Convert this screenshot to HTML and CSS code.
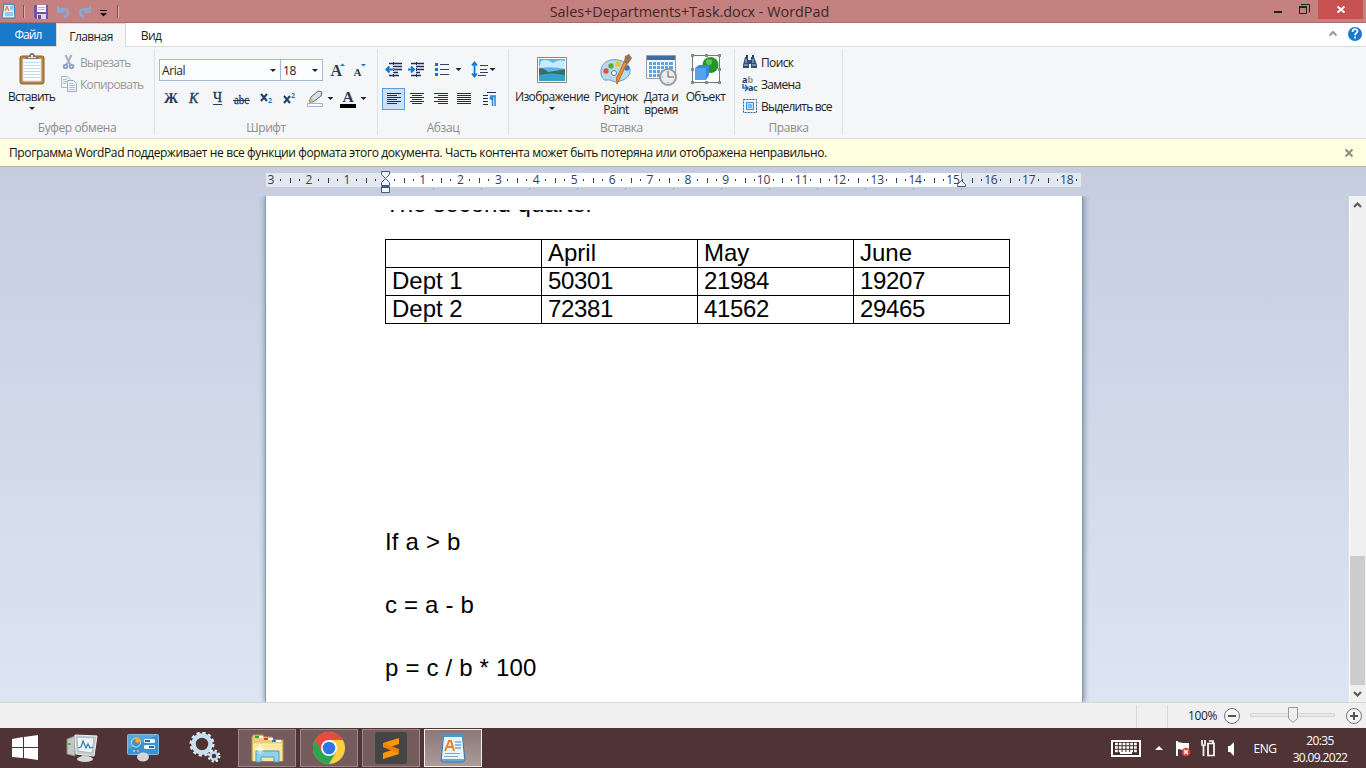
FILE: index.html
```html
<!DOCTYPE html>
<html lang="ru">
<head>
<meta charset="utf-8">
<title>Sales+Departments+Task.docx - WordPad</title>
<link rel="stylesheet" href="styles.css">
</head>
<body>
<div class="window">
  <header class="titlebar">
    <svg class="quick" width="125" height="22" viewBox="0 0 125 22">
      <path d="M4 4h10l1 14H2z" fill="#d8efff" stroke="#337daf"/><path d="M3 3h11v2H3z" fill="#4b9bc5"/><path d="M5 11l2-5 2 5M6 9h2" stroke="#f17a16" fill="none"/><path d="M10 7h3M10 9h3M5 13h8M5 15h8" stroke="#609bc6"/>
      <path d="M23.500 5v13M117.500 5v13" stroke="#7e5053"/><path d="M24.500 6v12M118.500 6v12" stroke="#ddb0b0"/>
      <path d="M34 5h14v14H36l-2-2z" fill="#7651aa"/><path d="M37 5h9v7h-9z" fill="#faf9ff"/><path d="M38 7.500h7M38 9.500h7" stroke="#b8b2ce"/><path d="M37 14h9v5h-9z" fill="#ddd6ed"/><path d="M38 15h3v4h-3z" fill="#6a4b95"/>
      <path d="M60 9.500h4c5 0 5 5 0 8" fill="none" stroke="#91a5c8" stroke-width="3"/><path d="M57 5v8h8z" fill="#91a5c8"/>
      <path d="M88 9.500h-4c-5 0-5 5 0 8" fill="none" stroke="#91a5c8" stroke-width="3"/><path d="M91 5v8h-8z" fill="#91a5c8"/>
      <path d="M100 10.500h7" stroke="#111"/><path d="M100 13h7l-3.500 3.500z" fill="#111"/>
    </svg>
    <h1 class="title">Sales+Departments+Task.docx - WordPad</h1>
    <svg class="winctl" width="92" height="22" viewBox="0 0 92 22"><path d="M0 11h8v2H0z" fill="#222"/><path d="M25.500 6.500h7v7h-7zM27 4.500h8.500v8" fill="none" stroke="#222"/><path d="M25 6h8v2h-8z" fill="#222"/><path d="M44 0h45v19H44z" fill="#c75050"/><path d="M63.500 6.500l7 6M70.500 6.500l-7 6" stroke="#fff" stroke-width="2"/></svg>
  </header>
  <nav class="tabs">
    <span class="tab file">Файл</span><span class="tab active">Главная</span><span class="tab view">Вид</span>
    <svg class="help" width="40" height="23" viewBox="0 0 40 23"><path d="M3.500 12.500l3.500-3.500 3.500 3.500" fill="none" stroke="#999" stroke-width="2"/><circle cx="29" cy="11" r="7" fill="#1979ca"/><path d="M26.500 9c0-4 5-3.500 5-.8 0 1.800-2.500 1.900-2.500 4M29 13.500v2" fill="none" stroke="#fff" stroke-width="1.800"/></svg>
  </nav>
  <section class="ribbon">
    <div class="group clipboard">
      <div class="tools">
        <div class="paste">
          <svg width="26" height="32" viewBox="0 0 26 32"><rect x="1" y="3" width="24" height="28" rx="2" fill="#b98343" stroke="#91602b"/><path d="M4 6h18v22H4z" fill="#fbfdff" stroke="#ddd"/><path d="M5 9.500h16M5 12.500h16M5 15.500h16M5 18.500h16M5 21.500h16M5 24.500h16" stroke="#c3dbee"/><path d="M6 6V4h4q0-4 3-4t3 4h4v2z" fill="#797c80"/><path d="M9 4.500h8" stroke="#ddd"/><circle cx="13" cy="3" r="1" fill="#fff"/></svg>
          <span>Вставить</span><i class="arrow"></i>
        </div>
        <div class="clips">
          <div class="clip"><svg width="16" height="16" viewBox="0 0 16 16"><path d="M4.500 1l5 10M10.500 1l-5 10" stroke="#a6b1c7" stroke-width="2"/><circle cx="4.500" cy="12.500" r="1.800" fill="none" stroke="#91a4c4" stroke-width="2"/><circle cx="10.500" cy="12.500" r="1.800" fill="none" stroke="#91a4c4" stroke-width="2"/></svg><span>Вырезать</span></div>
          <div class="clip"><svg width="16" height="17" viewBox="0 0 16 17"><path d="M.5.5h6l3 3v8h-9z" fill="#f2f6fc" stroke="#a7b6ce"/><path d="M6.500 4.500h6l3 3v8h-9z" fill="#f5f9ff" stroke="#96a9c6"/><path d="M2 3.500h4M2 5.500h4M2 7.500h3M8 7.500h4M8 9.500h6M8 11.500h6M8 13.500h6" stroke="#a9bedc"/></svg><span>Копировать</span></div>
        </div>
      </div>
      <div class="caption">Буфер обмена</div>
    </div>
    <div class="group font-group">
      <div class="tools font-tools">
        <div class="font-row">
          <div class="combo family"><span>Arial</span><i class="arrow"></i></div><div class="combo size"><span>18</span><i class="arrow"></i></div>
          <svg width="44" height="22" viewBox="0 0 44 22"><text x="7.500" y="17" class="serif" font-size="16">A</text><path d="M17 7h5l-2.500-2.500zM38 5h5l-2.500 2.500z" fill="#1979ca"/><text x="30.500" y="17" class="serif" font-size="11">A</text></svg>
        </div>
        <svg width="214" height="24" viewBox="0 0 214 24">
          <text class="serif" x="5" y="17" font-size="14" textLength="14" lengthAdjust="spacingAndGlyphs">Ж</text><text class="serif light" x="30" y="17" font-size="14" font-style="italic" stroke="#263b5a" stroke-width=".4">К</text><text class="serif light" x="54" y="15.500" font-size="14" stroke="#263b5a" stroke-width=".4">Ч</text><path d="M54 18.500h9M74 14.500h17" stroke="#243b5e"/><text class="serif light" x="75" y="17.500" font-size="12.500" textLength="15" lengthAdjust="spacingAndGlyphs" stroke="#263b5a" stroke-width=".3">abc</text>
          <path d="M102 8l6 7M108 8l-6 7M125 10l6 7M131 10l-6 7" stroke="#243f68" stroke-width="2"/><text x="109" y="17" class="tiny">2</text><text x="132" y="12" class="tiny">2</text>
          <path d="M148.500 17.500h15v3h-15z" fill="#fff" stroke="#9fb3d5"/><path d="M150 16l2-5 7-6 4 1-1 4-8 6z" fill="#d7e0ed" stroke="#5b6983"/><path d="M150 16l2-4 3 3z" fill="#eab84c"/><path d="M168.500 11h6l-3 3zM201.500 11h6l-3 3z" fill="#222"/><text x="183.500" y="15.500" class="serif" font-size="15.500">A</text><path d="M181 18h16v4h-16z"/>
        </svg>
      </div>
      <div class="caption">Шрифт</div>
    </div>
    <div class="group para-group">
      <div class="tools para-tools">
        <svg width="124" height="22" viewBox="0 0 124 22"><path d="M8 4.500h13M13 7.500h8M13 10.500h8M13 13.500h4M8 16.500h10" stroke="#18325d" stroke-width="1.300"/><path d="M12.500 3v16" stroke="#18325d" stroke-dasharray="1 1"/><path d="M6 10.500h6M8.500 7.500l-3 3 3 3" stroke="#1475d1" stroke-width="2" fill="none"/><path d="M30 4.500h13M35 7.500h8M35 10.500h8M35 13.500h4M30 16.500h10" stroke="#18325d" stroke-width="1.300"/><path d="M35.500 3v16" stroke="#18325d" stroke-dasharray="1 1"/><path d="M27 10.500h6M30 7.500l3 3-3 3" stroke="#1475d1" stroke-width="2" fill="none"/><path d="M54 4h3v3h-3zM54 9h3v3h-3zM54 14h3v3h-3z" fill="#1475d1"/><path d="M59 5.500h9M59 10.500h9M59 15.500h9M99 6.500h8M99 10.500h7M99 13.500h8M97 16.500h8" stroke="#31415f"/><path d="M93.500 4v13M91 6.500l2.500-3L96 6.500M91 14.500l2.500 3 2.500-3" stroke="#1475d1" stroke-width="1.800" fill="none"/><path d="M74.500 9h6l-3 3zM108.500 9h6l-3 3z" fill="#222"/></svg>
        <div class="align-row"><span class="selected"><svg width="14" height="14" viewBox="0 0 14 14"><path d="M0 1.500h14M0 3.500h10M0 5.500h14M0 7.500h10M0 9.500h14M0 11.500h10" stroke="#182f56"/></svg></span><svg width="100" height="14" viewBox="0 0 100 14"><path d="M5 1.500h14M7 3.500h10M5 5.500h14M7 7.500h10M5 9.500h14M7 11.500h10M29 1.500h14M33 3.500h10M29 5.500h14M33 7.500h10M29 9.500h14M33 11.500h10M52 1.500h14M52 3.500h14M52 5.500h14M52 7.500h14M52 9.500h14M52 11.500h14M82 .5h9M78 3.500h5M78 6.500h5M78 9.500h5M78 12.500h5" stroke="#182f56"/><path d="M85 4h6M87.500 4v10M90 4v10" stroke="#3187d6" stroke-width="1.500"/><circle cx="86.500" cy="6" r="2" fill="#3187d6"/></svg></div>
      </div>
      <div class="caption">Абзац</div>
    </div>
    <div class="group insert-group">
      <div class="tools insert-tools">
        <div class="big picture"><svg width="32" height="34" viewBox="0 0 32 34"><path d="M1.500 4.500h29v25h-29z" fill="#fff" stroke="#888"/><path d="M3 6h26v22H3z" fill="#5eb4e9"/><path d="M5 8q6-3 12 2 5-4 12-2v8Q18 13 3 15z" fill="#c8ecff"/><path d="M3 15q5 0 9 4 9-1 17-3v8H3z" fill="#356f66"/><path d="M3 22q12-3 26 0v6H3z" fill="#35a2cd"/></svg><span>Изображение</span><i class="arrow"></i></div>
        <div class="big paint"><svg width="34" height="34" viewBox="0 0 34 34"><path d="M2 20C1 9 12 4 23 8c12 5 10 17-2 20-6 3-8-2-13-1-3 1-6-3-6-7z" fill="#b8dced" stroke="#619bc0"/><circle cx="15" cy="20" r="2.500" fill="#f6f8fa" stroke="#517e9e"/><circle cx="7" cy="18" r="2.700" fill="#d95442"/><circle cx="12" cy="13" r="2.700" fill="#60a93d"/><circle cx="19" cy="11" r="2.700" fill="#edc030"/><circle cx="28" cy="15" r="2.700" fill="#3d78c5"/><path d="M28 10L18 31q-2-6 2-11l5-11z" fill="#f49336" stroke="#b8651e"/><path d="M25 9l1-6 4-2 3 4-4 6z" fill="#997354"/></svg><span>Рисунок<br>Paint</span></div>
        <div class="big date"><svg width="34" height="34" viewBox="0 0 34 34"><path d="M2.500 2.500h29v23h-29z" fill="#f5f9fd" stroke="#959da6"/><path d="M3 3h28v4H3z" fill="#426a9a"/><path d="M5 9h24v15H5z" fill="#5aa4e2"/><path d="M5 12.500h24M5 16.500h24M5 20.500h24M8.500 9v15M12.500 9v15M16.500 9v15M20.500 9v15M24.500 9v15" stroke="#fff"/><circle cx="24" cy="24" r="8" fill="#e8eef0" stroke="#999" stroke-width="2"/><path d="M24 18v6h6" fill="none" stroke="#58636b"/><path d="M24 29v1M18 24h1" stroke="#777"/></svg><span>Дата и<br>время</span></div>
        <div class="big object"><svg width="32" height="34" viewBox="-1 -1 32 34"><path d="M1.500 1.500h27v27h-27z" fill="#fff" stroke="#777"/><circle cx="19.500" cy="11" r="8" fill="#229629"/><circle cx="18" cy="8" r="3" fill="#69bf52"/><path d="M4 14l4-3h10v10l-3 5H4z" fill="#3288dc"/><path d="M4 14h11v12H4z" fill="#55a1ed"/><path d="M0 0h3v3H0zM14 0h3v3h-3zM27 0h3v3h-3zM0 14h3v3H0zM27 14h3v3h-3zM0 27h3v3H0zM14 27h3v3h-3zM27 27h3v3h-3z" fill="#8a8a8a"/></svg><span>Объект</span></div>
      </div>
      <div class="caption">Вставка</div>
    </div>
    <div class="group edit-group">
      <div class="tools edit-tools">
        <div class="edit-item"><svg width="16" height="16" viewBox="0 0 16 16"><path d="M3 3h3v3h3V3h3l3 8v3H9v-4H7v4H1v-3z" fill="#314e77"/><path d="M4 1h2v2H4zM10 1h2v2h-2z" fill="#243a59"/><path d="M2 11h4M10 11h4M4 5v4M11 5v4" stroke="#b9cbe0"/></svg><span>Поиск</span></div>
        <div class="edit-item"><svg class="replace-icon" width="16" height="16" viewBox="0 0 16 16"><text x="0" y="7" class="replace">a</text><text x="5.500" y="7" class="replace grey">b</text><text x="6" y="15" class="replace">a</text><text x="11" y="15" class="replace green">c</text><path d="M1 8v4h4M3 9l3 3-3 3" fill="none" stroke="#1674cf" stroke-width="1.500"/></svg><span>Замена</span></div>
        <div class="edit-item"><svg width="16" height="16" viewBox="0 0 16 16"><path d="M1.500 1.500h13v13h-13z" fill="none" stroke="#235d92" stroke-dasharray="2 1"/><path d="M4.500 4.500h7v7h-7z" fill="#c6e4ff" stroke="#3b8bd7"/><path d="M6 6h4v4H6z" fill="#77b9f2"/></svg><span class="select-all">Выделить все</span></div>
      </div>
      <div class="caption">Правка</div>
    </div>
  </section>
  <aside class="notice"><span>Программа WordPad поддерживает не все функции формата этого документа. Часть контента может быть потеряна или отображена неправильно.</span><svg width="10" height="10" viewBox="0 0 10 10"><path d="M1.500 1.500l7 7M8.500 1.500l-7 7" stroke="#8b8b83" stroke-width="2"/></svg></aside>
  <main class="canvas">
    <div class="ruler">
      <div class="scale"><div class="cells"><b>3</b><b>2</b><b>1</b><b></b><b>1</b><b>2</b><b>3</b><b>4</b><b>5</b><b>6</b><b>7</b><b>8</b><b>9</b><b>10</b><b>11</b><b>12</b><b>13</b><b>14</b><b>15</b><b>16</b><b>17</b><b>18</b></div></div>
      <div class="tabstops"></div>
      <svg class="indent" width="10" height="24" viewBox="0 0 10 24"><path d="M.5 1.500h8v3l-4 4 4 4v3h-8v-3l4-4-4-4zM.5 16.500h8v6h-8zM.5 17.500h8" fill="#f3f5f9" stroke="#405d80"/></svg>
      <svg class="right-indent" width="10" height="15" viewBox="0 0 10 15"><path d="M4.500 0v6" stroke="#8796ab"/><path d="M.5 11.500l4-4 4 4v2h-8z" fill="#f3f5f9" stroke="#405d80"/></svg>
    </div>
    <div class="workspace">
      <article class="page">
        <div class="heading-clip"><h2>The second quarter</h2></div>
        <table><tbody><tr><td></td><td>April</td><td>May</td><td>June</td></tr><tr><td>Dept 1</td><td class="num">50301</td><td class="num">21984</td><td class="num">19207</td></tr><tr><td>Dept 2</td><td class="num">72381</td><td class="num">41562</td><td class="num">29465</td></tr></tbody></table>
        <div class="formulas"><p>If a &gt; b</p><p>c = a - b</p><p>p = c / b * 100</p></div>
      </article>
      <div class="scrollbar"><svg width="16" height="18" viewBox="0 0 16 18"><path d="M4 11l3.500-3.500L11 11" fill="none" stroke="#555" stroke-width="2"/></svg><div class="track"><div class="thumb"></div></div><svg width="16" height="17" viewBox="0 0 16 17"><path d="M4 7l3.500 3.500L11 7" fill="none" stroke="#555" stroke-width="2"/></svg></div>
    </div>
  </main>
  <footer class="status"><span>100%</span><svg width="143" height="24" viewBox="0 0 143 24"><circle cx="9" cy="13" r="7.500" fill="#f5f5f5" stroke="#777"/><path d="M5 13h8" stroke="#555" stroke-width="2"/><path d="M27.500 10.500h84v3h-84z" fill="#e7eaea" stroke="#d1d5d5"/><path d="M65.500 4.500h9v11l-4.500 4-4.500-4z" fill="#eee" stroke="#999"/><circle cx="131" cy="13" r="7.500" fill="#f5f5f5" stroke="#777"/><path d="M127 13h8M131 9v8" stroke="#555" stroke-width="2"/></svg></footer>
</div>
<footer class="taskbar">
  <div class="launchers">
    <svg width="27" height="28" viewBox="0 0 27 28"><path d="M0 5l11-2v10H0zM12 3l14-2v12H12zM0 14h11v10L0 23zM12 14h14v12l-14-2z" fill="#fff"/></svg>
    <svg class="monitor" width="32" height="32" viewBox="0 0 32 32"><path d="M1 7l8-3v20l-8-2z" fill="#c3c6c6" stroke="#888"/><path d="M2 12h3" stroke="#39c928" stroke-width="2"/><path d="M9 3l22 1-3 20-18-2z" fill="#c8cbcb" stroke="#f3f3f3"/><path d="M11 5l17 1-2 15-14-2z" fill="#edf6fa" stroke="#a7b9c5"/><path d="M12 16l3-1 2-6 3 7 2-4 2 4 3-1" fill="none" stroke="#3b7ead" stroke-width="1.300"/><path d="M16 23h7l1 4h-9z" fill="#bbb"/><ellipse cx="19" cy="27" rx="8" ry="3" fill="#d8d8d8"/></svg>
    <svg class="panel" width="32" height="32" viewBox="0 0 32 32"><rect x=".5" y="2.500" width="31" height="20" rx="1" fill="#3e91cf" stroke="#82b8df"/><path d="M1 3h30L1 17z" fill="#58a6da"/><circle cx="9" cy="10.500" r="4.500" fill="#4690c5" stroke="#c6e5f5"/><path d="M8.500 5v5.500H14q-.5-5.500-5.500-5.500" fill="#fbad25"/><path d="M17.500 7.500h10v3h-10zM17.500 13.500h10v3h-10z" fill="#266b9f" stroke="#e0f0fb"/><path d="M23 8h4v2h-4zM18 14h4v2h-4z" fill="#fff"/><path d="M6 18h2v2H6z" fill="#8bd0f0"/><path d="M10 18h2v2h-2z" fill="#f0a53c"/><ellipse cx="16" cy="25" rx="6" ry="4.500" fill="#d3d4d3"/></svg>
    <svg class="gear" width="33" height="33" viewBox="0 0 33 33"><circle cx="13" cy="12" r="11" fill="none" stroke="#dce8f2" stroke-width="3" stroke-dasharray="3.200 2.560"/><circle cx="13" cy="12" r="8.500" fill="none" stroke="#c8dff1" stroke-width="4.500"/><circle cx="25" cy="24" r="5.200" fill="none" stroke="#e1edf4" stroke-width="2.500" stroke-dasharray="2.200 1.880"/><circle cx="25" cy="24" r="3.500" fill="none" stroke="#c3dbed" stroke-width="2.500"/></svg>
  </div>
  <div class="apps">
    <span class="app"><svg width="34" height="32" viewBox="0 0 34 32"><path d="M2 5l1-2h10l1 2h8l1 3h10v21H2z" fill="#e8cd75" stroke="#bd9a43"/><path d="M3 12h29v17H3z" fill="#f6e6a0"/><path d="M5 5h8M14 7h9M23 9h8" stroke="#fff" stroke-width="2"/><path d="M5 5h4" stroke="#16b52c" stroke-width="2"/><path d="M14 7h4" stroke="#d83a22" stroke-width="2"/><path d="M22 9h4" stroke="#2182cb" stroke-width="2"/><path d="M3 12h29M3 16h29" stroke="#f9f1c1"/><path d="M6 30V19h23v11h-5v-5H11v5z" fill="#8ed1eb" stroke="#4a9fc5"/><path d="M10 13v9M5.500 17.500h9M7 14.500l6 6M13 14.500l-6 6" stroke="#fff"/></svg></span>
    <span class="app"><svg width="32" height="32" viewBox="0 0 32 32"><circle cx="16" cy="16" r="16" fill="#ffcf42"/><path d="M16 16L2.100 8A16 16 0 0 0 16 32l7-12z" fill="#2da44f"/><path d="M2.100 8a16 16 0 0 1 27.800 0H16v8l-7 4z" fill="#e94b3c"/><circle cx="16" cy="16" r="8" fill="#fff"/><circle cx="16" cy="16" r="6.300" fill="#2f76e8"/></svg></span>
    <span class="app"><svg width="32" height="32" viewBox="0 0 32 32"><rect width="32" height="32" rx="2" fill="#454545"/><path d="M8 11l16-5v6l-9 3 9 3v4L8 27v-6l9-3-9-3z" fill="#ff9800"/><path d="M8 11l16 6v5L8 15z" fill="#f27e00"/></svg></span>
    <span class="app current"><svg width="26" height="32" viewBox="0 0 26 32"><path d="M4 3h18l3 25-2 2H2l-1-2z" fill="#67a8d3" stroke="#397bab"/><path d="M4 5h18l2 22H2z" fill="#e7f4fc"/><path d="M2 2h22v3H2z" fill="#4997c7"/><path d="M5 19l4-10h2l3 10M7 15h5" fill="none" stroke="#ef8026" stroke-width="2"/><path d="M15 10h6M15 13h6M15 16h6" stroke="#4581c2"/><path d="M5 21.500h15M4 24.500h14" stroke="#8ba7b7"/></svg></span>
  </div>
  <div class="tray"><svg width="129" height="24" viewBox="0 0 129 24"><path d="M1 5h28v15H1z" fill="#41292a" stroke="#fff" stroke-width="2"/><path d="M4 8h22M4 11.500h22M4 15h22" stroke="#fff" stroke-width="2.500" stroke-dasharray="2.800 1"/><path d="M9 17h12" stroke="#fff" stroke-width="2"/><path d="M44 14h8l-4-4z" fill="#fff"/><path d="M66 5v15" stroke="#fff" stroke-width="2"/><path d="M67 6l5 1h6v7h-6l-5-1z" fill="#fff"/><circle cx="75" cy="16" r="4.300" fill="#e5402e"/><path d="M73 14l4 4M77 14l-4 4" stroke="#fff" stroke-width="1.500"/><path d="M97 7.500h6v12h-6zM98 5h4v2M91 4v4M94 4v4M90 9h5M92.500 9v11" fill="none" stroke="#fff" stroke-width="1.700"/><path d="M117 10h2l4-4v14l-4-4h-2z" fill="#fff"/></svg><span class="lang">ENG</span><div class="clock"><span>20:35</span><span>30.09.2022</span></div></div>
</footer>
</body>
</html>
```
FILE: styles.css
```css
* { box-sizing: border-box; }
body { margin: 0; width: 1366px; height: 768px; overflow: hidden; font: 12px/15px "Open Sans", "Noto Sans", sans-serif; letter-spacing: -0.4px; color: #222; }
svg { display: block; flex: none; }
.window { height: 728px; display: flex; flex-direction: column; }
.titlebar { height: 23px; background: #c58080; border-bottom: 1px solid #a96c6d; display: flex; }
.title { flex: 1; margin: 0; padding-right: 20px; text-align: center; font-size: 14.4px; letter-spacing: 0; line-height: 23px; font-weight: 400; color: #3b2929; }
.winctl { margin-left: auto; }
.tabs { height: 24px; display: flex; background: #fff; border-bottom: 1px solid #d9dadc; }
.tab { line-height: 25px; text-align: center; letter-spacing: -0.6px; }
.file { width: 56px; height: 23px; line-height: 24px; background: #1979ca; color: #fff; letter-spacing: -0.9px; }
.active { width: 70px; height: 24px; background: #f5f6f7; border: 1px solid #d9dadc; border-bottom: 0; }
.view { width: 50px; }
.help { margin-left: auto; }
.ribbon { height: 92px; display: flex; background: #f5f6f7; border-bottom: 1px solid #d9dadc; padding-top: 2px; }
.group { height: 86px; border-right: 1px solid #e0e2e4; display: flex; flex-direction: column; white-space: nowrap; }
.clipboard { width: 155px; }
.font-group { width: 223px; }
.para-group { width: 131px; }
.insert-group { width: 226px; }
.edit-group { width: 108px; }
.tools { height: 73px; display: flex; }
.caption { text-align: center; color: #8d8d8d; line-height: 15px; }
.arrow { width: 0; height: 0; border: 3px solid transparent; border-top-color: #222; border-bottom: 0; }
.paste { width: 61px; padding-left: 2px; display: flex; flex-direction: column; align-items: center; padding-top: 4px; }
.paste span { margin-top: 4px; letter-spacing: -0.75px; }
.paste .arrow { margin-top: 3px; }
.clips { padding-top: 2px; color: #999; }
.clip { height: 22px; display: flex; align-items: center; gap: 3px; letter-spacing: -0.7px; }
.font-tools { flex-direction: column; padding: 10px 0 0 4px; }
.font-row { display: flex; height: 22px; }
.combo { height: 22px; border: 1px solid #a3b7d7; background: #fcfdff; display: flex; align-items: center; justify-content: space-between; padding: 0 4px 0 2px; }
.family { width: 122px; }
.size { width: 43px; margin-left: -1px; }
.font-tools > svg { margin-top: 5px; }
.serif { font-family: "Liberation Serif", serif; font-weight: 700; fill: #263b5a; letter-spacing: 0; }
.light { font-weight: 400; }
.tiny { font: 700 7px "Open Sans", sans-serif; fill: #1979ca; }
.para-tools { flex-direction: column; padding: 10px 0 0 3px; }
.align-row { display: flex; align-items: center; height: 22px; margin-top: 7px; }
.selected { width: 23px; height: 22px; display: flex; align-items: center; justify-content: center; background: #cce0f7; border: 1px solid #5b9bdc; margin-left: 1px; }
.insert-tools { padding-left: 2px; }
.big { text-align: center; display: flex; flex-direction: column; align-items: center; padding-top: 4px; letter-spacing: -0.6px; }
.big span { line-height: 13px; margin-top: 3px; }
.big .arrow { margin-top: 4px; }
.picture { width: 82px; }
.paint { width: 46px; }
.date { width: 44px; }
.object { width: 45px; }
.edit-tools { flex-direction: column; padding: 2px 0 0 7px; }
.edit-item { height: 22px; display: flex; align-items: center; gap: 3px; letter-spacing: -0.65px; }
.select-all { letter-spacing: -0.8px; }
.replace-icon { overflow: visible; }
.replace { font: 700 9px "Noto Sans", sans-serif; letter-spacing: 0; fill: #283d59; }
.grey { fill: #999; }
.green { fill: #229045; }
.notice { height: 28px; background: #ffffe1; border-bottom: 1px solid #b1b1ad; display: flex; align-items: center; justify-content: space-between; padding: 0 12px 0 9px; color: #111; white-space: nowrap; }
.notice span { letter-spacing: -0.385px; }
.canvas { height: 535px; background: linear-gradient(#c5cddf, #dce6f2); display: flex; flex-direction: column; }
.ruler { height: 29px; position: relative; padding: 6px 0 0 266px; }
.scale { width: 815px; height: 14px; overflow: hidden; background: linear-gradient(90deg, #e4e8f1 119px, #fff 119px 695px, #e4e8f1 695px); }
.cells { display: flex; width: 834px; margin-left: -14px; }
.cells b { width: 37.9px; flex: none; height: 14px; font-weight: 400; font-size: 12px; letter-spacing: -0.2px; line-height: 14px; text-align: center; color: #31415f; background: linear-gradient(#263e64, #263e64) 0 5px / 1px 5px no-repeat, linear-gradient(#263e64, #263e64) 9px 6px / 1px 2px no-repeat, linear-gradient(#263e64, #263e64) 28px 6px / 1px 2px no-repeat; }
.tabstops { width: 529px; height: 2px; margin: 1px 0 0 167px; background: repeating-linear-gradient(90deg, #9ba6bb 0 1px, transparent 1px 48px); }
.indent { position: absolute; left: 381px; top: 3px; }
.right-indent { position: absolute; left: 957px; top: 6px; }
.workspace { height: 506px; display: flex; justify-content: space-between; padding-left: 266px; }
.page { width: 816px; background: #fff; box-shadow: 1px 0 #8799b0, 3px 0 5px #8e9cb4, -1px 0 #8799b0, -2px 0 5px #94a2b9; clip-path: inset(0 -8px 0 -8px); padding: 14px 0 0 119px; color: #000; font: 24px/28px "Liberation Sans", Arial, sans-serif; letter-spacing: 0; }
.heading-clip { height: 29px; overflow: hidden; }
.heading-clip h2 { margin: -20px 0 0; font-size: 24px; line-height: 28px; font-weight: 400; letter-spacing: 0.04px; }
table { width: 625px; table-layout: fixed; border-collapse: collapse; line-height: 25px; }
td { height: 28px; padding: 0 0 2px 6px; border: 1px solid #000; }
.num { letter-spacing: -0.35px; }
.formulas { padding-top: 204px; letter-spacing: 0.18px; }
.formulas p { margin: 0; height: 63px; line-height: 28px; }
.scrollbar { width: 17px; height: 506px; background: #f0f0f0; border-left: 1px solid #fff; display: flex; flex-direction: column; }
.track { height: 471px; padding-top: 342px; }
.thumb { width: 15px; height: 129px; background: #cdcdcd; }
.status { height: 26px; background: linear-gradient(#d7d7d7, #d7d7d7) 1136px 2px / 1px 23px no-repeat, linear-gradient(#d7d7d7, #d7d7d7) 1167px 2px / 1px 23px no-repeat, #f0f0f0; border-top: 1px solid #d7d7d7; display: flex; justify-content: flex-end; }
.status span { line-height: 25px; margin-right: 6px; }
.taskbar { height: 40px; background: #503334; display: flex; color: #fff; }
.launchers { width: 238px; display: flex; align-items: center; padding-left: 12px; }
.monitor { margin-left: 27px; }
.panel { margin-left: 29px; }
.gear { margin-left: 30px; }
.apps { display: flex; gap: 4px; padding-top: 1px; }
.app { width: 58px; height: 38px; background: #745c5c; border: 1px solid #9c8787; display: flex; align-items: center; justify-content: center; }
.current { background: linear-gradient(#8d7777, #ab9b9b); border-color: #f2eeee; }
.tray { margin-left: auto; display: flex; align-items: center; }
.lang { width: 50px; text-align: center; }
.clock { width: 60px; margin-right: 16px; padding-top: 2px; text-align: center; display: flex; flex-direction: column; line-height: 17px; letter-spacing: -0.65px; }
```
